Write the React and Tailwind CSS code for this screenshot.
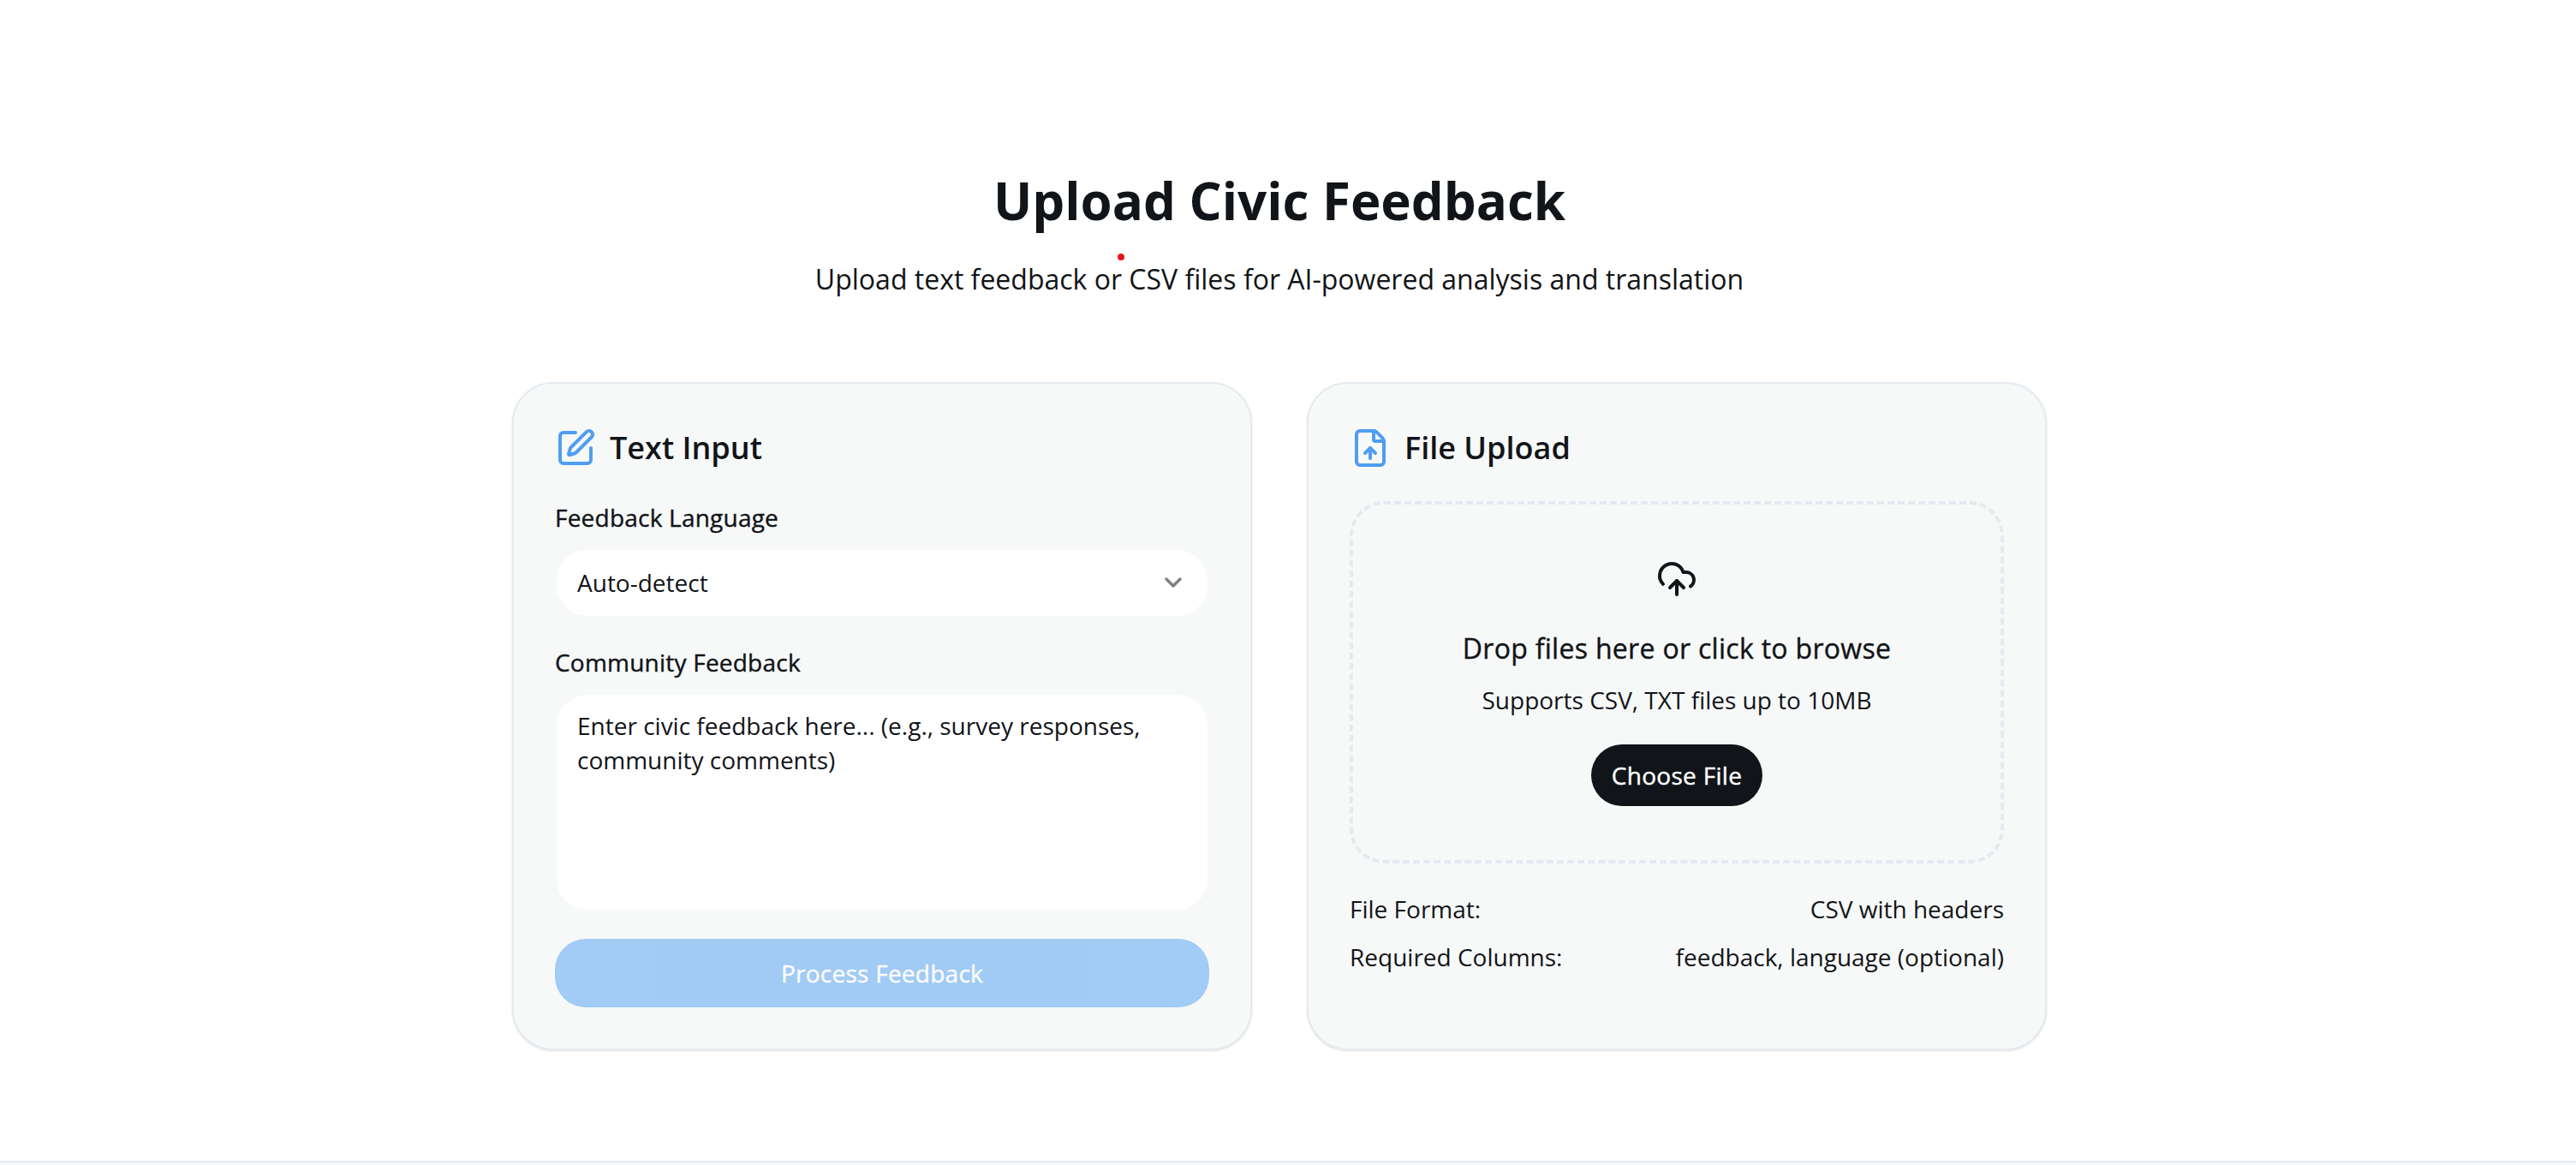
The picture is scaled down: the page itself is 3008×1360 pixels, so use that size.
import React from "react";
import { SquarePen, FileUp, CloudUpload, ChevronDown } from "lucide-react";

export default function App() {
  return (
    <div className="relative bg-white text-[#111418] font-['Open_Sans',sans-serif]">
      <main className="flex h-[1355px] flex-col items-center pr-[20px] pt-[198px]">
        <span className="absolute left-[1305px] top-[296px] h-[8px] w-[8px] rounded-full bg-[#e8141c]" />
        <h1 className="text-[60px] font-bold leading-[72px]">Upload Civic Feedback</h1>
        <p className="mt-[32px] text-[32px] leading-[48px]">Upload text feedback or CSV files for AI-powered analysis and translation</p>
        <div className="mt-[96px] grid w-[1792px] grid-cols-2 gap-[64px]">
          <section className="flex h-[780px] flex-col rounded-[48px] border-2 border-[#e5ebf0] bg-[#f7f9f9] p-[48px] shadow-sm">
            <div className="flex h-[54px] items-center gap-[16px]">
              <SquarePen size={48} strokeWidth={2} className="text-[#4e9ef2]" />
              <h2 className="text-[36px] font-semibold leading-[54px]">Text Input</h2>
            </div>
            <label className="mt-[34px] block text-[28px] font-medium leading-[40px] tracking-[0.22px] [-webkit-text-stroke:0.4px_currentColor]">Feedback Language</label>
            <div className="mx-[2px] mt-[18px] flex h-[77px] items-center justify-between rounded-[36px] bg-white px-[24px] text-[28px]">
              <span>Auto-detect</span>
              <ChevronDown size={32} strokeWidth={2.6} className="text-[#808080]" />
            </div>
            <label className="mt-[34px] block text-[28px] font-medium leading-[40px] tracking-[0.22px] [-webkit-text-stroke:0.4px_currentColor]">Community Feedback</label>
            <textarea
              readOnly
              className="mx-[2px] mt-[18px] h-[252px] resize-none rounded-[36px] bg-white px-[24px] py-[16px] text-[28px] leading-[40px] outline-none placeholder:text-[#111418]"
              placeholder="Enter civic feedback here... (e.g., survey responses, community comments)"
            />
            <button disabled className="mt-[34px] h-[80px] w-full rounded-[36px] bg-[#4e9ef2] text-[28px] font-medium tracking-[0.25px] text-white opacity-50 [-webkit-text-stroke:0.4px_currentColor]">
              Process Feedback
            </button>
          </section>
          <section className="flex h-[780px] flex-col rounded-[48px] border-2 border-[#e5ebf0] bg-[#f7f9f9] p-[48px] shadow-sm">
            <div className="flex h-[54px] items-center gap-[16px]">
              <FileUp size={48} strokeWidth={2} className="text-[#4e9ef2]" />
              <h2 className="text-[36px] font-semibold leading-[54px]">File Upload</h2>
            </div>
            <div className="mt-[35px] flex h-[423px] flex-col items-center rounded-[40px] border-4 border-dashed border-[#e4eaf0] pt-[63px]">
              <CloudUpload size={48} strokeWidth={2} />
              <p className="mt-[33px] text-[32px] font-medium leading-[48px] tracking-[0.3px] [-webkit-text-stroke:0.4px_currentColor]">Drop files here or click to browse</p>
              <p className="mt-[16px] text-[28px] leading-[40px]">Supports CSV, TXT files up to 10MB</p>
              <button className="mt-[32px] h-[72px] w-[200px] rounded-[36px] bg-[#111418] text-[28px] font-medium tracking-[0.3px] text-white [-webkit-text-stroke:0.4px_currentColor]">Choose File</button>
            </div>
            <div className="mt-[33px] flex flex-col gap-[16px] text-[28px] leading-[40px]">
              <div className="flex justify-between"><span>File Format:</span><span>CSV with headers</span></div>
              <div className="flex justify-between"><span>Required Columns:</span><span>feedback, language (optional)</span></div>
            </div>
          </section>
        </div>
      </main>
      <footer className="h-[5px] border-t-2 border-[#e5ebf0] bg-[#f7f9f9]" />
    </div>
  );
}
